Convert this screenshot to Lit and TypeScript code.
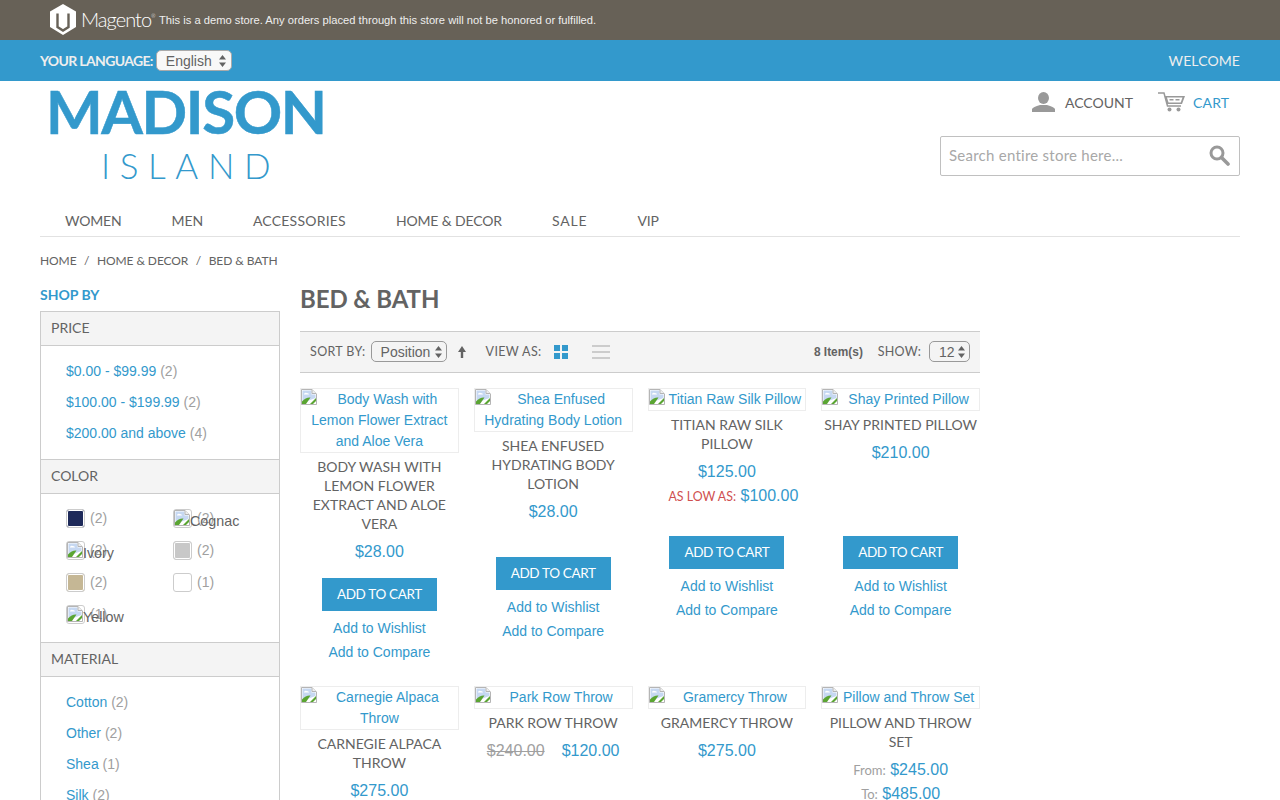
import { LitElement, html, css, nothing } from 'lit';
import { customElement } from 'lit/decorators.js';

const brokenIcon = html`<svg class="broken" width="16" height="16" viewBox="0 0 16 16">
  <path d="M.5.5h10.5l4.500 4.500v10.500H.5z" fill="#fff" stroke="#b5b5b5" />
  <path d="M1.500 1.500h9v4h4v3.500L9 11 1.500 14z" fill="#c6d8f2" />
  <path d="M3 5q1-2 3-1 2 0 2 1.500H3z" fill="#fff" />
  <path d="M1 15v-2.500Q5 8 9.500 8.500L5 15z" fill="#5aa532" />
  <path d="M9 15l6-6v3l-3 3z" fill="#5aa532" />
  <path d="M11 .5v4h4" fill="#eee" stroke="#b5b5b5" />
</svg>`;

const carets = html`<svg class="carets" width="7" height="12" viewBox="0 0 7 12">
  <path d="M3.500 0L7 4.500H0zM3.500 12L0 7.500h7z" fill="#636363" />
</svg>`;

interface Product {
  name: string;
  prices: unknown;
}

const products: Product[] = [
  { name: 'Body Wash with Lemon Flower Extract and Aloe Vera', prices: html`<div class="price">$28.00</div>` },
  { name: 'Shea Enfused Hydrating Body Lotion', prices: html`<div class="price">$28.00</div>` },
  {
    name: 'Titian Raw Silk Pillow',
    prices: html`<div class="price">$125.00</div>
      <div class="price tier"><span class="low">AS LOW AS:</span> $100.00</div>`,
  },
  { name: 'Shay Printed Pillow', prices: html`<div class="price">$210.00</div>` },
  { name: 'Carnegie Alpaca Throw', prices: html`<div class="price">$275.00</div>` },
  {
    name: 'Park Row Throw',
    prices: html`<div class="price"><span class="old">$240.00</span><span class="sale">$120.00</span></div>`,
  },
  { name: 'Gramercy Throw', prices: html`<div class="price">$275.00</div>` },
  {
    name: 'Pillow and Throw Set',
    prices: html`<div class="price"><span class="from">From:</span> $245.00</div>
      <div class="price"><span class="from">To:</span> $485.00</div>`,
  },
];

const swatches = [
  { color: '#1e2a5a', count: 2 },
  { alt: 'Cognac', count: 2 },
  { alt: 'Ivory', count: 2 },
  { color: '#c8c8c8', count: 2 },
  { color: '#c5b795', count: 2 },
  { color: '#fff', count: 1 },
  { alt: 'Yellow', count: 1 },
];

@customElement('app-root')
export class AppRoot extends LitElement {
  static styles = css`
    :host {
      display: block;
      height: 800px;
      overflow: hidden;
      font-family: 'Liberation Sans', Arial, sans-serif;
      font-size: 14px;
      color: #636363;
      background: #fff;
    }
    a {
      color: #3399cc;
      text-decoration: none;
    }

    .demo {
      height: 40px;
      background: #676157;
      display: flex;
      align-items: center;
      padding-left: 50px;
      color: #eeeeee;
      font-size: 11.2px;
    }
    .demo svg {
      flex: none;
      margin-top: -1px;
    }
    .mag {
      font-family: Lato, sans-serif;
      font-weight: 300;
      font-size: 20px;
      color: #fff;
      width: 78px;
      margin: -2px 0 0 5px;
      letter-spacing: -0.95px;
    }
    .mag sup {
      font-size: 5px;
      vertical-align: 9px;
      line-height: 0;
    }

    .lang {
      height: 41px;
      background: #3399cc;
      color: #eee;
      display: flex;
      align-items: center;
      padding: 0 40px;
      font-family: Lato, sans-serif;
      font-size: 14px;
    }
    .lang b {
      font-weight: 700;
      margin-right: 3px;
      letter-spacing: -0.65px;
    }
    .lang .welcome {
      margin-left: auto;
      letter-spacing: 0.1px;
    }
    .sel {
      display: inline-flex;
      align-items: center;
      justify-content: space-between;
      box-sizing: border-box;
      height: 21px;
      border: 1px solid #aaa;
      border-radius: 5px;
      font-family: 'Liberation Sans', Arial, sans-serif;
      font-size: 14px;
      color: #636363;
    }
    .lang .sel {
      width: 76px;
      padding: 0 5px 0 9px;
      background: #f8f8f8;
    }

    .wrap {
      padding: 0 40px;
    }
    .head {
      height: 125px;
      display: flex;
      justify-content: space-between;
    }
    .logo {
      color: #3399cc;
      font-family: Lato, sans-serif;
      white-space: nowrap;
    }
    .logo .l1 {
      font-size: 60px;
      font-weight: 700;
      line-height: 62px;
      letter-spacing: -1.4px;
      padding-left: 6px;
      margin-top: -1px;
      -webkit-text-stroke: 0.5px #3399cc;
    }
    .logo .l2 {
      font-size: 35px;
      font-weight: 300;
      line-height: 42px;
      letter-spacing: 9.6px;
      margin-top: 2px;
      padding-left: 61px;
    }
    .tools {
      width: 300px;
      display: flex;
      flex-direction: column;
    }
    .links {
      display: flex;
      align-items: center;
      height: 22px;
      margin-top: 10px;
      padding-left: 92px;
      font-family: Lato, sans-serif;
      font-size: 14px;
    }
    .links svg {
      flex: none;
    }
    .links .acc {
      margin: 0 25px 0 10px;
      color: #636363;
    }
    .links .crt {
      margin-left: 8px;
      letter-spacing: 0.2px;
    }
    .search {
      margin-top: 23px;
      height: 40px;
      box-sizing: border-box;
      border: 1px solid #c0c0c0;
      border-radius: 2px;
      display: flex;
      align-items: center;
      justify-content: space-between;
      padding: 0 9px 2px 8px;
      font-family: Lato, sans-serif;
      font-size: 15px;
      letter-spacing: 0.25px;
      color: #a8a8a8;
    }
    .nav {
      height: 31px;
      box-sizing: border-box;
      border-bottom: 1px solid #e2e2e2;
      display: flex;
      gap: 50px;
      padding-left: 25px;
      font-family: Lato, sans-serif;
      font-size: 14px;
      line-height: 29px;
      color: #636363;
      letter-spacing: -0.15px;
    }
    .nav span:nth-child(3) {
      letter-spacing: 0.22px;
    }
    .nav span:nth-child(5) {
      letter-spacing: 0.85px;
    }
    .crumbs {
      height: 47px;
      margin-bottom: 2px;
      display: flex;
      align-items: center;
      font-family: Lato, sans-serif;
      font-size: 12px;
      letter-spacing: -0.08px;
      color: #636363;
    }
    .crumbs i {
      font-style: normal;
      margin: 0 7.500px;
    }

    .cols {
      display: flex;
      gap: 20px;
    }
    .side {
      width: 240px;
      flex: none;
    }
    .shop {
      font-family: Lato, sans-serif;
      font-weight: 700;
      font-size: 14px;
      line-height: 20px;
      color: #3399cc;
      margin-bottom: 6px;
      margin-top: -1px;
    }
    .block {
      border: 1px solid #cccccc;
      border-top: 0;
      border-bottom: 0;
    }
    .block h4 {
      margin: 0;
      height: 35px;
      box-sizing: border-box;
      border-top: 1px solid #cccccc;
      border-bottom: 1px solid #cccccc;
      background: #f4f4f4;
      padding-left: 10px;
      font-family: Lato, sans-serif;
      font-weight: 400;
      font-size: 14px;
      line-height: 32px;
      color: #636363;
    }
    .block ul {
      list-style: none;
      margin: 0;
      padding: 10px 0 10px 25px;
      line-height: 31px;
    }
    .count {
      color: #a0a0a0;
    }
    .swatches {
      display: grid;
      grid-template-columns: 107px 107px;
      grid-auto-rows: 32px;
      padding: 15px 0 5px 25px;
    }
    .sw {
      position: relative;
      display: flex;
      align-items: flex-start;
      gap: 5px;
      line-height: 19px;
    }
    .chip {
      width: 19px;
      height: 19px;
      box-sizing: border-box;
      border: 1px solid #cccccc;
      border-radius: 3px;
      flex: none;
      box-shadow: inset 0 0 0 1px #fff;
    }
    .alt {
      position: absolute;
      left: 1px;
      top: 1px;
      white-space: nowrap;
      color: #636363;
      font-size: 14.300px;
      line-height: 23px;
    }
    .alt .broken {
      float: left;
    }

    .main {
      width: 680px;
      flex: none;
    }
    h1 {
      margin: 0;
      font-family: Lato, sans-serif;
      font-size: 24px;
      font-weight: 700;
      line-height: 30px;
      height: 35px;
      margin-top: -2px;
      color: #636363;
      letter-spacing: -0.1px;
    }
    .bar {
      height: 42px;
      box-sizing: border-box;
      border-top: 1px solid #cccccc;
      border-bottom: 1px solid #cccccc;
      background: #f4f4f4;
      display: flex;
      align-items: center;
      padding: 0 10px 1px;
      font-family: Lato, sans-serif;
      font-size: 12.500px;
      letter-spacing: 0.35px;
      color: #636363;
      margin-top: 12px;
    }
    .bar .sel {
      background: #f4f4f4;
      border-color: #999;
      padding: 0 4px 0 9px;
      height: 21px;
      letter-spacing: 0;
    }
    .bar .pos {
      width: 76px;
      margin: 0 11px 0 5px;
    }
    .bar .num {
      width: 41px;
      margin-left: 8px;
    }
    .bar .viewas {
      margin: 0 12px 0 20px;
    }
    .bar .show {
      letter-spacing: 0.2px;
    }
    .bar .items {
      margin-left: auto;
      font-family: 'Liberation Sans', Arial, sans-serif;
      font-size: 11.900px;
      letter-spacing: 0;
      font-weight: 700;
      margin-right: 15px;
    }
    .grid {
      margin-top: 15px;
      display: grid;
      grid-template-columns: repeat(4, 1fr);
      column-gap: 15px;
      row-gap: 22px;
      align-items: start;
    }
    .item {
      min-width: 0;
      text-align: center;
    }
    .shot {
      display: block;
      border: 1px solid #ededed;
      line-height: 21px;
      font-size: 14px;
    }
    .shot .broken {
      float: left;
    }
    .info {
      height: 125px;
      box-sizing: border-box;
      padding-top: 4px;
    }
    .name {
      font-family: Lato, sans-serif;
      text-transform: uppercase;
      font-size: 14px;
      line-height: 19px;
      margin-bottom: 7px;
      color: #636363;
    }
    .price {
      font-size: 16px;
      line-height: 24px;
      color: #3399cc;
    }
    .tier {
      padding-left: 13px;
    }
    .low {
      font-family: Lato, sans-serif;
      font-size: 12.400px;
      color: #cf5050;
    }
    .from {
      font-family: Lato, sans-serif;
      font-size: 13px;
      color: #a0a0a0;
    }
    .old {
      color: #a0a0a0;
      text-decoration: line-through;
      margin-right: 17px;
    }
    .btn {
      display: block;
      width: 115px;
      height: 33px;
      margin: 0 auto;
      background: #3399cc;
      color: #fff;
      font-family: Lato, sans-serif;
      font-size: 13.500px;
      letter-spacing: -0.35px;
      line-height: 33px;
    }
    .acts {
      margin-top: 5px;
      line-height: 24px;
    }
    .acts a {
      display: block;
    }
  `;

  private renderItem(p: Product) {
    return html`<div class="item">
      <a class="shot" href="#">${brokenIcon}${p.name}</a>
      <div class="info">
        <div class="name">${p.name}</div>
        ${p.prices}
      </div>
      <a class="btn" href="#">ADD TO CART</a>
      <div class="acts">
        <a href="#">Add to Wishlist</a>
        <a href="#">Add to Compare</a>
      </div>
    </div>`;
  }

  private renderSide() {
    const prices = [
      ['$0.00 - $99.99', 2],
      ['$100.00 - $199.99', 2],
      ['$200.00 and above', 4],
    ];
    const material = [
      ['Cotton', 2],
      ['Other', 2],
      ['Shea', 1],
      ['Silk', 2],
    ];
    const row = ([label, n]: (string | number)[]) =>
      html`<li><a href="#">${label}</a> <span class="count">(${n})</span></li>`;
    return html`<aside class="side">
      <div class="shop">SHOP BY</div>
      <div class="block">
        <h4>PRICE</h4>
        <ul>${prices.map(row)}</ul>
        <h4>COLOR</h4>
        <div class="swatches">
          ${swatches.map(
            (s) => html`<div class="sw">
              <span class="chip" style="background-color:${s.color ?? '#fff'}"></span>
              <span class="count">(${s.count})</span>
              ${s.alt ? html`<span class="alt">${brokenIcon}${s.alt}</span>` : nothing}
            </div>`,
          )}
        </div>
        <h4>MATERIAL</h4>
        <ul>${material.map(row)}</ul>
      </div>
    </aside>`;
  }

  render() {
    return html`
      <div class="demo">
        <svg width="26" height="31" viewBox="0 0 26 31">
          <path d="M13 0l13 7.500V23l-13 8-13-8V7.500z" fill="#fff" />
          <path d="M7.500 9.500v13.500l5.500 3.500 5.500-3.500V9.500" fill="none" stroke="#676157" stroke-width="2.400" />
        </svg>
        <span class="mag">Magento<sup>®</sup></span>
        <span>This is a demo store. Any orders placed through this store will not be honored or fulfilled.</span>
      </div>
      <div class="lang">
        <b>YOUR LANGUAGE:</b>
        <span class="sel">English ${carets}</span>
        <span class="welcome">WELCOME</span>
      </div>
      <div class="wrap">
        <div class="head">
          <div class="logo">
            <div class="l1">MADISON</div>
            <div class="l2">ISLAND</div>
          </div>
          <div class="tools">
            <div class="links">
              <svg width="23" height="20" viewBox="0 0 23 20">
                <ellipse cx="11.500" cy="6" rx="5.500" ry="6" fill="#999" />
                <path d="M0 20v-3q1-2 8-4h7q7 2 8 4v3z" fill="#999" />
              </svg>
              <a class="acc" href="#">ACCOUNT</a>
              <svg width="27" height="20" viewBox="0 0 27 20">
                <path d="M0 1h6l3.500 13H23" fill="none" stroke="#999" stroke-width="1.500" />
                <path d="M6.500 4H27l-3 8H9z" fill="#999" />
                <path d="M9 5.500h15.500l-1.800 5H10.500z" fill="#fff" />
                <path d="M11.500 7h4v1.500h-4zM17.500 7h4v1.500h-4z" fill="#999" />
                <circle cx="11.500" cy="17.500" r="2" fill="#999" />
                <circle cx="20.500" cy="17.500" r="2" fill="#999" />
              </svg>
              <a class="crt" href="#">CART</a>
            </div>
            <div class="search">
              <span>Search entire store here...</span>
              <svg style="margin-top:1px" width="21" height="21" viewBox="0 0 21 21">
                <circle cx="8" cy="8" r="6" fill="none" stroke="#999" stroke-width="3" />
                <path d="M12.500 12.500l6.500 6.500" stroke="#999" stroke-width="3.600" stroke-linecap="round" />
              </svg>
            </div>
          </div>
        </div>
        <nav class="nav">
          <span>WOMEN</span><span>MEN</span><span>ACCESSORIES</span><span>HOME &amp; DECOR</span><span>SALE</span><span>VIP</span>
        </nav>
        <div class="crumbs">HOME<i>/</i>HOME &amp; DECOR<i>/</i>BED &amp; BATH</div>
        <div class="cols">
          ${this.renderSide()}
          <main class="main">
            <h1>BED &amp; BATH</h1>
            <div class="bar">
              <span>SORT BY:</span>
              <span class="sel pos">Position ${carets}</span>
              <svg width="8" height="12" viewBox="0 0 8 12">
                <path d="M4 0l4 6H5.200v6H2.800V6H0z" fill="#636363" />
              </svg>
              <span class="viewas">VIEW AS:</span>
              <svg width="14" height="14" viewBox="0 0 14 14">
                <path d="M0 0h6v6H0zM8 0h6v6H8zM0 8h6v6H0zM8 8h6v6H8z" fill="#3399cc" />
              </svg>
              <svg style="margin-left:24px" width="18" height="14" viewBox="0 0 18 14">
                <path d="M0 0h18v2H0zM0 6h18v2H0zM0 12h18v2H0z" fill="#cccccc" />
              </svg>
              <span class="items">8 Item(s)</span>
              <span class="show">SHOW:</span>
              <span class="sel num">12 ${carets}</span>
            </div>
            <div class="grid">${products.map((p) => this.renderItem(p))}</div>
          </main>
        </div>
      </div>
    `;
  }
}
